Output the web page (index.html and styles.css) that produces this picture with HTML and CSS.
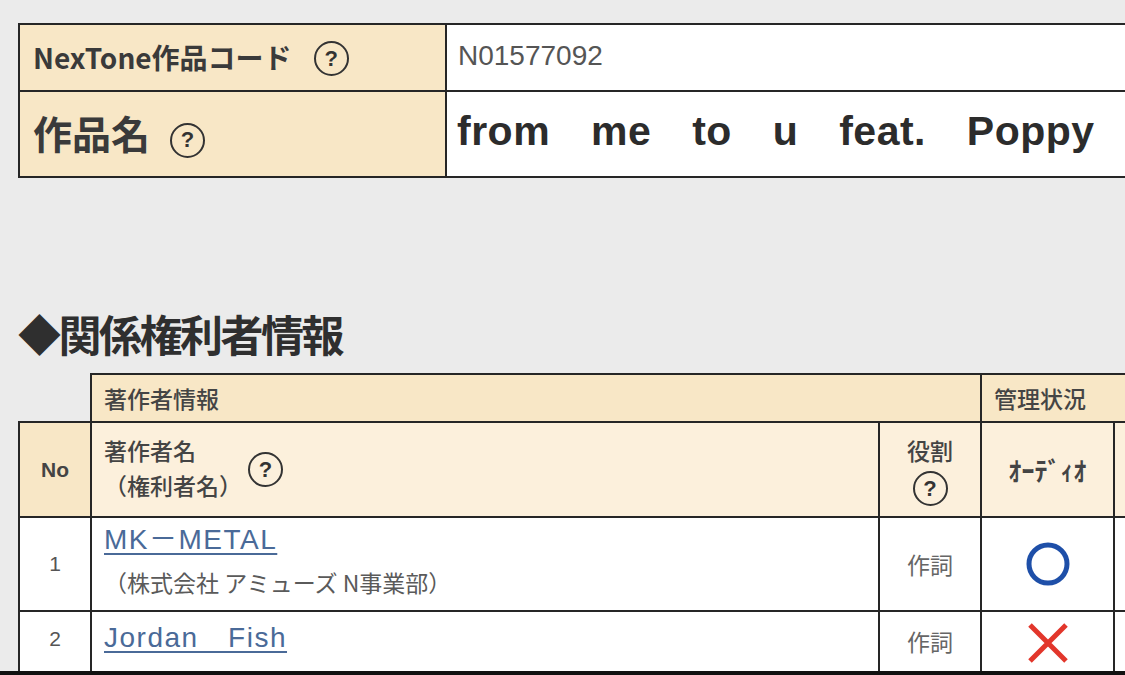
FILE: index.html
```html
<!DOCTYPE html>
<html lang="ja">
<head>
<meta charset="utf-8">
<title>作品詳細</title>
<link rel="stylesheet" href="styles.css">
</head>
<body>
<main class="page">
  <table class="work">
    <colgroup><col class="work-label-col"><col class="work-value-col"></colgroup>
    <tr class="work-code-row">
      <th class="work-label">NexTone作品コード<span class="help help-sm">?</span></th>
      <td class="work-code">N01577092</td>
    </tr>
    <tr class="work-title-row">
      <th class="work-label work-label-lg">作品名<span class="help help-sm">?</span></th>
      <td class="work-title">from me to u feat. Poppy</td>
    </tr>
  </table>

  <h2 class="section-title">◆関係権利者情報</h2>

  <table class="rights">
    <colgroup>
      <col class="c-no"><col class="c-name"><col class="c-role"><col class="c-audio"><col class="c-next">
    </colgroup>
    <tr class="head1">
      <th class="blank"></th>
      <th class="group" colspan="2">著作者情報</th>
      <th class="group" colspan="2">管理状況</th>
    </tr>
    <tr class="head2">
      <th class="no-head">No</th>
      <th class="name-head">
        <div class="name-head-inner">
          <div class="name-head-text"><div>著作者名</div><div class="paren">（権利者名）</div></div>
          <span class="help">?</span>
        </div>
      </th>
      <th class="role-head"><div>役割</div><span class="help">?</span></th>
      <th class="audio-head">ｵｰﾃﾞｨｵ</th>
      <th class="next-head"></th>
    </tr>
    <tr class="row1">
      <td class="no">1</td>
      <td class="name"><a href="#" class="author">MK－METAL</a><div class="holder">（株式会社 アミューズ N事業部）</div></td>
      <td class="role">作詞</td>
      <td class="mark"><svg width="46" height="46" viewBox="0 0 46 46"><circle cx="23" cy="23" r="19" fill="none" stroke="#1e4fa8" stroke-width="5"/></svg></td>
      <td class="next"></td>
    </tr>
    <tr class="row2">
      <td class="no">2</td>
      <td class="name"><a href="#" class="author">Jordan　Fish</a></td>
      <td class="role">作詞</td>
      <td class="mark"><svg width="46" height="46" viewBox="0 0 46 46"><path d="M5 5 L41 41 M41 5 L5 41" stroke="#e2362b" stroke-width="5" fill="none"/></svg></td>
      <td class="next"></td>
    </tr>
  </table>
</main>
<div class="frame-edge"></div>
</body>
</html>
```
FILE: styles.css
```css
html, body {
  margin: 0;
  padding: 0;
  background: #ebebeb;
  overflow: hidden;
  height: 675px;
}
body {
  font-family: "Noto Sans CJK JP", sans-serif;
  color: #333;
}
.page {
  padding: 23px 0 0 18px;
  width: 1300px;
}

/* top table */
.work {
  border-collapse: collapse;
  width: 1200px;
  table-layout: fixed;
}
.work-label-col { width: 427px; }
.work th, .work td {
  border: 2px solid #262626;
  padding: 0;
}
.work-code-row { height: 67px; }
.work-title-row { height: 86px; }
.work-label {
  background: #f8e7c6;
  text-align: left;
  padding-left: 13px !important;
  font-size: 28px;
  font-weight: 700;
  color: #3a3a3a;
  white-space: nowrap;
}
.work-label-lg {
  font-size: 39px;
  padding-bottom: 4px !important;
}
.work-code {
  background: #fff;
  padding-left: 11px !important;
  padding-bottom: 3px !important;
  font-family: "Liberation Sans", sans-serif;
  font-size: 28px;
  color: #555;
}
.work-title {
  background: #fff;
  padding-left: 10px !important;
  padding-bottom: 6px !important;
  font-family: "Liberation Sans", sans-serif;
  font-weight: 700;
  font-size: 41px;
  word-spacing: 29px;
  letter-spacing: 0.5px;
  color: #2c2c2c;
  white-space: nowrap;
}

.help {
  display: inline-flex;
  align-items: center;
  justify-content: center;
  flex: none;
  width: 31px;
  height: 31px;
  border: 2px solid #333;
  border-radius: 50%;
  font-family: "Liberation Sans", sans-serif;
  font-size: 22px;
  font-weight: 700;
  color: #333;
  vertical-align: middle;
  line-height: 1;
}
.help-sm { margin-left: 22px; position: relative; top: -2px; }
.work-label-lg .help-sm { margin-left: 20px; top: 2px; }

/* section title */
.section-title {
  margin: 127px 0 0 0;
  font-size: 43px;
  font-weight: 700;
  line-height: 56px;
  color: #2f2f2f;
  letter-spacing: -2.5px;
}

/* rights table */
.rights {
  margin-top: 12px;
  border-collapse: collapse;
  table-layout: fixed;
  width: 1240px;
}
.c-no { width: 72px; }
.c-name { width: 788px; }
.c-role { width: 102px; }
.c-audio { width: 133px; }
.c-next { width: 145px; }
.rights th, .rights td {
  border: 2px solid #262626;
  padding: 0;
}
.rights th.blank {
  border: none;
  background: transparent;
}
.head1 { height: 48px; }
.head2 { height: 95px; }
.row1 { height: 94px; }
.row2 { height: 70px; }
.group {
  background: #f8e7c6;
  text-align: left;
  padding-left: 12px !important;
  font-size: 23px;
  font-weight: 500;
  color: #444;
}
.head2 th {
  background: #fcf0dc;
  font-size: 23px;
  font-weight: 500;
  color: #444;
}
.head2 .no-head {
  background: #f8e7c6;
  font-weight: 700;
  font-family: "Liberation Sans", sans-serif;
  font-size: 21px;
}
.name-head { text-align: left; padding-left: 12px !important; }
.name-head-inner { display: flex; align-items: center; gap: 6px; }
.name-head-text { line-height: 35px; padding-bottom: 4px; }
.role-head { text-align: center; line-height: 34px; }
.role-head .help { margin-top: 2px; }
.head2 .audio-head { font-weight: 700; font-size: 26px; }
.rights td { background: #fff; }
.no {
  text-align: center;
  font-family: "Liberation Sans", sans-serif;
  font-size: 21px;
  color: #555;
}
.name { padding-left: 12px !important; vertical-align: top; }
.row1 .name { padding-top: 5px !important; }
.row2 .name { padding-top: 9px !important; vertical-align: top; }
.row2 .no, .row2 .role { vertical-align: top; padding-top: 15px !important; }
.row2 .role { padding-top: 12px !important; }
.row2 .mark { vertical-align: top; padding-top: 8px !important; }
.author {
  font-family: "Liberation Sans", "Noto Sans CJK JP", sans-serif;
  font-size: 28px;
  letter-spacing: 1.5px;
  color: #4a6a98;
  text-decoration: underline;
  text-underline-offset: 4px;
  line-height: 34px;
}
.holder {
  margin-top: 10px;
  font-size: 23px;
  color: #5a5a5a;
  line-height: 30px;
}
.role {
  text-align: center;
  font-size: 23px;
  color: #666;
}
.mark { text-align: center; }
.mark svg { display: block; margin: 0 auto; }

.frame-edge {
  position: fixed;
  left: 0;
  right: 0;
  bottom: 0;
  height: 4px;
  background: #111;
}
```
